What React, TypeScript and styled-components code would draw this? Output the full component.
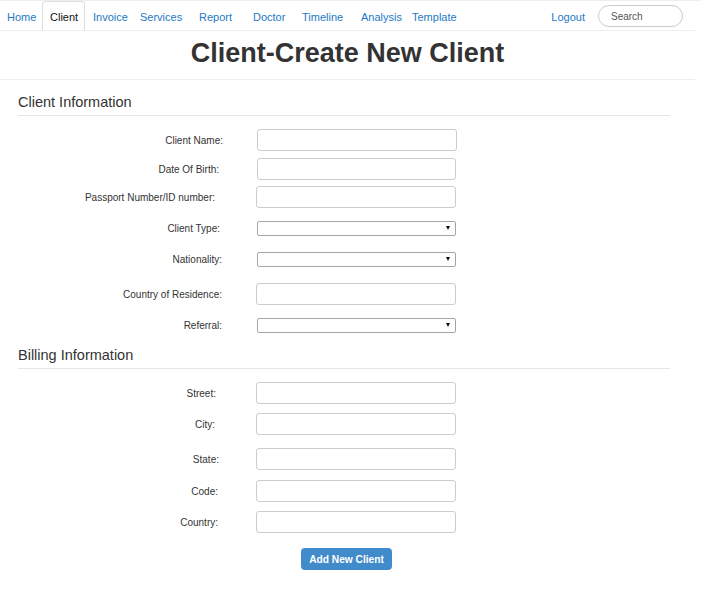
import React from 'react';
import styled, { createGlobalStyle, css } from 'styled-components';

const GlobalStyle = createGlobalStyle`
  * { box-sizing: border-box; }
  body {
    margin: 0;
    background: #fff;
    font-family: "Liberation Sans", Arial, sans-serif;
    color: #333;
  }
`;

const TopBar = styled.header`
  border-top: 1px solid #eee;
`;

const Nav = styled.nav`
  width: 695px;
  height: 30px;
  border-bottom: 1px solid #eee;
  display: flex;
  align-items: stretch;
`;

const NavItem = styled.a<{ $w?: number; $pl: number; $active?: boolean }>`
  ${(p) => (p.$w ? `width: ${p.$w}px;` : '')}
  flex: none;
  padding-left: ${(p) => p.$pl}px;
  padding-top: 3px;
  display: flex;
  align-items: center;
  font-size: 11px;
  text-decoration: none;
  color: #2479c5;
  white-space: nowrap;
  ${(p) =>
    p.$active &&
    css`
      color: #111;
      background: #fff;
      border: 1px solid #ddd;
      border-bottom: none;
      border-radius: 4px 4px 0 0;
      padding-top: 2px;
    `}
`;

const Spacer = styled.div`
  flex: 1;
`;

const LogoutLink = styled(NavItem)`
  margin-right: 13px;
`;

const SearchInput = styled.input`
  align-self: center;
  margin-top: 1px;
  margin-right: 12px;
  width: 85px;
  height: 22px;
  border: 1px solid #ccc;
  border-radius: 11px;
  padding: 0 12px;
  font-family: "Liberation Sans", Arial, sans-serif;
  font-size: 10px;
  color: #555;
  outline: none;
  &::placeholder {
    color: #555;
  }
`;

const Title = styled.h1`
  width: 695px;
  margin: 0;
  font-size: 27px;
  font-weight: bold;
  line-height: 44px;
  padding-bottom: 4px;
  text-align: center;
  color: #333;
  border-bottom: 1px solid #eee;
`;

const Content = styled.main`
  width: 695px;
  padding: 0 25px 30px 18px;
`;

const SectionHeading = styled.h2`
  margin: 14px 0 0;
  font-size: 14.5px;
  font-weight: normal;
  line-height: 17px;
  padding-bottom: 4px;
  border-bottom: 1px solid #e5e5e5;
  color: #333;
`;

const Row = styled.div<{ $mt: number }>`
  display: flex;
  align-items: center;
  margin-top: ${(p) => p.$mt}px;
`;

const Label = styled.label<{ $pr: number }>`
  flex: none;
  width: 206px;
  padding-right: ${(p) => p.$pr}px;
  text-align: right;
  font-size: 10px;
  color: #333;
  white-space: nowrap;
`;

const Field = styled.div<{ $ml: number }>`
  margin-left: ${(p) => p.$ml}px;
  position: relative;
  display: flex;
`;

const TextInput = styled.input<{ $w: number }>`
  width: ${(p) => p.$w}px;
  height: 22px;
  border: 1px solid #ccc;
  border-radius: 3px;
  padding: 0 6px;
  outline: none;
  background: #fff;
`;

const SelectWrap = styled(Field)`
  &::after {
    content: '';
    position: absolute;
    right: 6px;
    top: 5px;
    border-left: 2px solid transparent;
    border-right: 2px solid transparent;
    border-top: 4px solid #111;
    pointer-events: none;
  }
`;

const Select = styled.select<{ $w: number }>`
  appearance: none;
  -webkit-appearance: none;
  width: ${(p) => p.$w}px;
  height: 15px;
  border: 1px solid #a6a6a6;
  border-radius: 2px;
  background: #fff;
  padding: 0 4px;
  font-size: 10px;
  outline: none;
`;

const SubmitButton = styled.button`
  margin-top: 15px;
  margin-left: 283px;
  width: 91px;
  height: 22px;
  border: none;
  border-radius: 4px;
  background: #428bca;
  color: #fff;
  font-family: "Liberation Sans", Arial, sans-serif;
  font-weight: bold;
  font-size: 10.2px;
  cursor: pointer;
`;

type NavDef = { label: string; w: number; pl: number; active?: boolean };

const navItems: NavDef[] = [
  { label: 'Home', w: 42, pl: 7 },
  { label: 'Client', w: 43, pl: 7, active: true },
  { label: 'Invoice', w: 47, pl: 8 },
  { label: 'Services', w: 59, pl: 8 },
  { label: 'Report', w: 54, pl: 8 },
  { label: 'Doctor', w: 49, pl: 8 },
  { label: 'Timeline', w: 59, pl: 8 },
  { label: 'Analysis', w: 51, pl: 8 },
  { label: 'Template', w: 60, pl: 8 },
];

type FieldDef = {
  label: string;
  end: number;
  x: number;
  w: number;
  mt: number;
  select?: boolean;
};

const LABEL_RIGHT = 224;

const clientFields: FieldDef[] = [
  { label: 'Client Name:', end: 223, x: 257, w: 200, mt: 13 },
  { label: 'Date Of Birth:', end: 219, x: 257, w: 199, mt: 7 },
  { label: 'Passport Number/ID number:', end: 215, x: 256, w: 200, mt: 6 },
  { label: 'Client Type:', end: 220, x: 257, w: 199, mt: 13, select: true },
  { label: 'Nationality:', end: 222, x: 257, w: 199, mt: 16, select: true },
  { label: 'Country of Residence:', end: 222, x: 256, w: 200, mt: 16 },
  { label: 'Referral:', end: 222, x: 257, w: 199, mt: 13, select: true },
];

const billingFields: FieldDef[] = [
  { label: 'Street:', end: 216, x: 256, w: 200, mt: 13 },
  { label: 'City:', end: 215, x: 256, w: 200, mt: 9 },
  { label: 'State:', end: 219, x: 256, w: 200, mt: 13 },
  { label: 'Code:', end: 218, x: 256, w: 200, mt: 10 },
  { label: 'Country:', end: 218, x: 256, w: 200, mt: 9 },
];

const FormRow: React.FC<{ f: FieldDef }> = ({ f }) => (
  <Row $mt={f.mt}>
    <Label $pr={LABEL_RIGHT - f.end}>{f.label}</Label>
    {f.select ? (
      <SelectWrap $ml={f.x - LABEL_RIGHT}>
        <Select $w={f.w} defaultValue="">
          <option value=""></option>
        </Select>
      </SelectWrap>
    ) : (
      <Field $ml={f.x - LABEL_RIGHT}>
        <TextInput $w={f.w} type="text" />
      </Field>
    )}
  </Row>
);

export default function App() {
  return (
    <>
      <GlobalStyle />
      <TopBar>
        <Nav>
          {navItems.map((n) => (
            <NavItem key={n.label} href="#" $w={n.w} $pl={n.pl} $active={n.active}>
              {n.label}
            </NavItem>
          ))}
          <Spacer />
          <LogoutLink href="#" $pl={0}>
            Logout
          </LogoutLink>
          <SearchInput placeholder="Search" />
        </Nav>
      </TopBar>
      <Title>Client-Create New Client</Title>
      <Content>
        <SectionHeading>Client Information</SectionHeading>
        {clientFields.map((f) => (
          <FormRow key={f.label} f={f} />
        ))}
        <SectionHeading>Billing Information</SectionHeading>
        {billingFields.map((f) => (
          <FormRow key={f.label} f={f} />
        ))}
        <SubmitButton type="button">Add New Client</SubmitButton>
      </Content>
    </>
  );
}
